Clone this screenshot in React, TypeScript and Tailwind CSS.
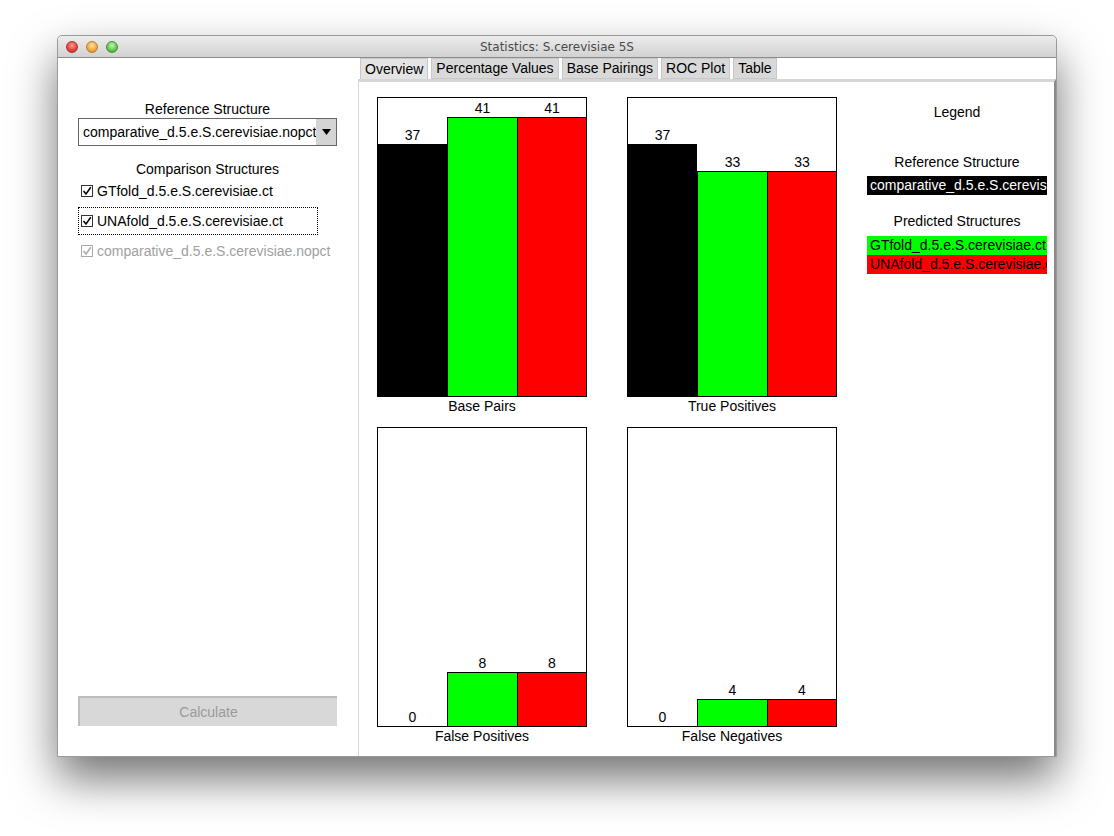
import React from "react";

const SANS = { fontFamily: '"Liberation Sans", Arial, sans-serif' };
const TITLE = { fontFamily: '"DejaVu Sans", "Liberation Sans", sans-serif' };

const MAX = 41;
const SCALE = 279;

interface ChartProps {
  title: string;
  values: [number, number, number];
}

function BarChart({ title, values }: ChartProps) {
  const h = (v: number) => Math.round((v * SCALE) / MAX);
  return (
    <div className="flex flex-col items-center">
      <div className="w-[210px] h-[300px] border border-black flex items-end">
        <div className="w-[69px] flex flex-col items-center justify-end">
          <span className="text-[14px] leading-[15px] mb-[1px]">{values[0]}</span>
          <div className="w-full bg-black" style={{ height: h(values[0]) }} />
        </div>
        <div className="w-[71px] flex flex-col items-center justify-end">
          <span className="text-[14px] leading-[15px] mb-[1px]">{values[1]}</span>
          <div
            className={`w-full bg-[#00ff00] border-black ${values[1] ? "border-t border-x" : ""}`}
            style={{ height: h(values[1]) }}
          />
        </div>
        <div className="flex-1 flex flex-col items-center justify-end">
          <span className="text-[14px] leading-[15px] mb-[1px]">{values[2]}</span>
          <div
            className={`w-full bg-[#ff0000] border-black ${values[2] ? "border-t" : ""}`}
            style={{ height: h(values[2]) }}
          />
        </div>
      </div>
      <div className="text-[14px] leading-[16px] mt-[1px] text-black">{title}</div>
    </div>
  );
}

function Check({ disabled }: { disabled?: boolean }) {
  return (
    <span
      className={`w-[12px] h-[12px] border flex items-center justify-center bg-white ${
        disabled ? "border-[#aaa]" : "border-[#333]"
      }`}
    >
      <svg width="10" height="10" viewBox="0 0 10 10">
        <path
          d="M1.5 5 L4 8 L8.8 1.2"
          fill="none"
          stroke={disabled ? "#aaa" : "#000"}
          strokeWidth="1.5"
        />
      </svg>
    </span>
  );
}

export default function App() {
  const tabs = ["Overview", "Percentage Values", "Base Pairings", "ROC Plot", "Table"];
  return (
    <div className="w-[1114px] h-[836px] bg-white pt-[35px] pl-[57px]" style={SANS}>
      <div className="w-[1000px] h-[722px] flex flex-col bg-white border border-[#9a9a9a] rounded-t-[5px] shadow-[0_22px_45px_rgba(0,0,0,0.55)]">
        {/* title bar */}
        <div className="h-[22px] flex items-center relative rounded-t-[5px] bg-gradient-to-b from-[#ececec] to-[#d2d2d2] border-b border-[#8c8c8c]">
          <div className="flex items-center gap-[8px] pl-[8px]">
            <span className="w-[12px] h-[12px] rounded-full bg-[radial-gradient(circle_at_50%_35%,#ff9a98,#e0403c_60%,#b02a27)] border border-[#a33]" />
            <span className="w-[12px] h-[12px] rounded-full bg-[radial-gradient(circle_at_50%_35%,#ffe0a0,#f0a63a_60%,#c07a20)] border border-[#b98030]" />
            <span className="w-[12px] h-[12px] rounded-full bg-[radial-gradient(circle_at_50%_35%,#c8f5b0,#62c451_60%,#3a8f2e)] border border-[#4a8f3a]" />
          </div>
          <div className="flex-1 text-center text-[12px] text-[#4a4a4a] pr-[60px]" style={TITLE}>
            Statistics: S.cerevisiae 5S
          </div>
        </div>

        <div className="flex-1 flex">
          {/* left panel */}
          <div className="w-[300px] flex flex-col pt-[43px] pl-[20px] pr-[21px] pb-[30px]">
            <div className="text-center text-[14px] leading-[16px]">Reference Structure</div>
            <div className="mt-[1px] h-[28px] border border-[#666] flex items-stretch bg-white">
              <div className="flex-1 text-[14px] flex items-center pl-[4px] overflow-hidden whitespace-nowrap">
                comparative_d.5.e.S.cerevisiae.nopct
              </div>
              <div className="w-[20px] bg-[#d4d4d4] flex items-center justify-center">
                <svg width="9" height="6" viewBox="0 0 9 6">
                  <path d="M0 0 H9 L4.5 6 Z" fill="#000" />
                </svg>
              </div>
            </div>
            <div className="text-center text-[14px] leading-[16px] mt-[15px]">Comparison Structures</div>
            <div className="flex items-center gap-[4px] h-[20px] mt-[4px] pl-[3px] text-[14px]">
              <Check />
              <span>GTfold_d.5.e.S.cerevisiae.ct</span>
            </div>
            <div className="flex items-center gap-[4px] h-[28px] mt-[6px] pl-[2px] w-[240px] border border-dotted border-black text-[14px]">
              <Check />
              <span>UNAfold_d.5.e.S.cerevisiae.ct</span>
            </div>
            <div className="flex items-center gap-[4px] h-[20px] mt-[6px] pl-[3px] text-[14px] text-[#a0a0a0]">
              <Check disabled />
              <span>comparative_d.5.e.S.cerevisiae.nopct</span>
            </div>
            <div className="flex-1" />
            <div className="h-[30px] w-[259px] bg-[#d8d8d8] border-t-2 border-l-2 border-[#bdbdbd] flex items-center justify-center text-[14px] text-[#9a9a9a]">
              Calculate
            </div>
          </div>

          {/* right panel */}
          <div className="flex-1 flex flex-col">
            <div className="h-[21px] flex items-end gap-[3px] pl-[2px]">
              {tabs.map((t, i) => (
                <div
                  key={t}
                  className={`h-[21px] px-[4px] flex items-center text-[14px] border border-[#c8c8c8] ${
                    i === 0 ? "bg-[#e4e4e4] border-b-0" : "bg-[#d9d9d9]"
                  }`}
                >
                  {t}
                </div>
              ))}
            </div>
            <div className="flex-1 flex border-t-[3px] border-l border-[#d6d6d6] border-r-2 border-r-[#8a8a8a] pl-[18px] pt-[15px]">
              <div className="grid grid-cols-[210px_210px] gap-x-[40px] gap-y-[13px] content-start">
                <BarChart title="Base Pairs" values={[37, 41, 41]} />
                <BarChart title="True Positives" values={[37, 33, 33]} />
                <BarChart title="False Positives" values={[0, 8, 8]} />
                <BarChart title="False Negatives" values={[0, 4, 4]} />
              </div>
              <div className="ml-[30px] w-[180px] flex flex-col text-[14px]">
                <div className="text-center leading-[16px] mt-[7px]">Legend</div>
                <div className="text-center leading-[16px] mt-[34px]">Reference Structure</div>
                <div className="h-[19px] mt-[6px] bg-black text-white px-[3px] flex items-center overflow-hidden whitespace-nowrap">
                  comparative_d.5.e.S.cerevisiae.nopct
                </div>
                <div className="text-center leading-[16px] mt-[18px]">Predicted Structures</div>
                <div className="h-[19px] mt-[7px] bg-[#00ff00] text-black px-[3px] flex items-center overflow-hidden whitespace-nowrap">
                  GTfold_d.5.e.S.cerevisiae.ct
                </div>
                <div className="h-[19px] bg-[#ff0000] text-black px-[3px] flex items-center overflow-hidden whitespace-nowrap">
                  UNAfold_d.5.e.S.cerevisiae.ct
                </div>
              </div>
            </div>
          </div>
        </div>
      </div>
    </div>
  );
}
